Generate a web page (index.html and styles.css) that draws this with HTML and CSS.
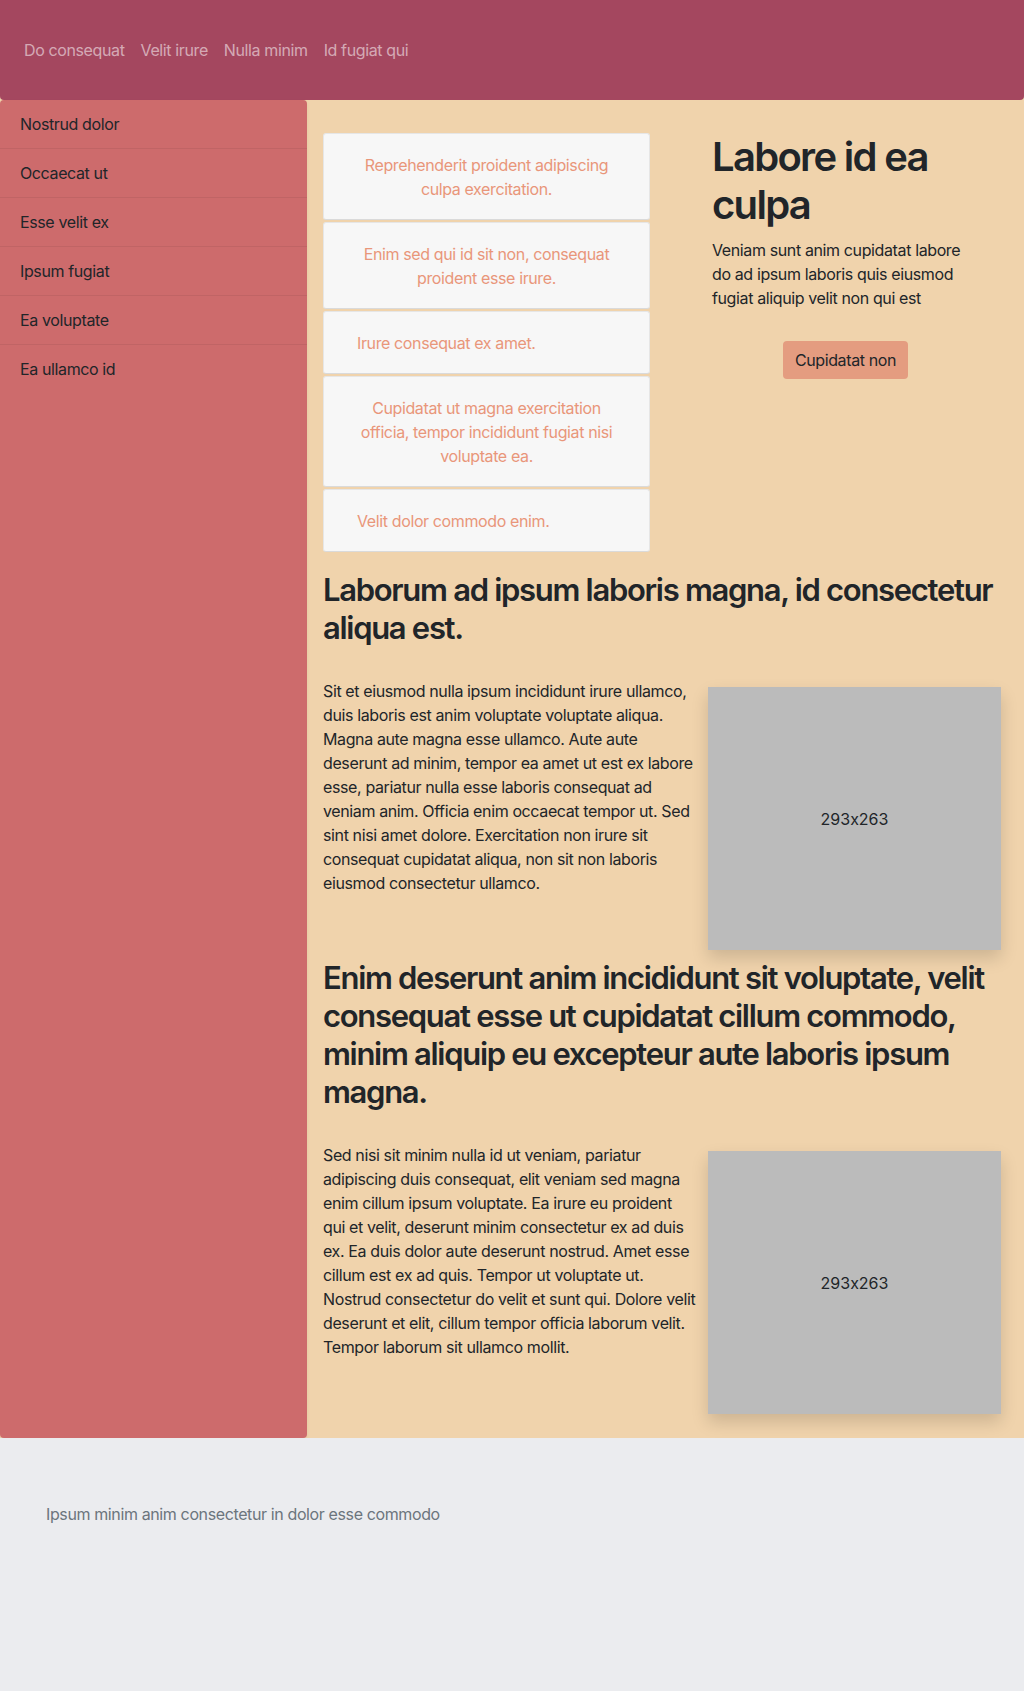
FILE: index.html
```html
<!DOCTYPE html>
<html lang="en">
<head>
<meta charset="utf-8">
<title>Page</title>
<link rel="stylesheet" href="styles.css">
</head>
<body>
<header class="topbar">
  <nav class="topnav">
    <a href="#">Do consequat</a>
    <a href="#">Velit irure</a>
    <a href="#">Nulla minim</a>
    <a href="#">Id fugiat qui</a>
  </nav>
</header>
<div class="layout">
  <aside class="sidebar">
    <a href="#" class="side-item">Nostrud dolor</a>
    <a href="#" class="side-item">Occaecat ut</a>
    <a href="#" class="side-item">Esse velit ex</a>
    <a href="#" class="side-item">Ipsum fugiat</a>
    <a href="#" class="side-item">Ea voluptate</a>
    <a href="#" class="side-item">Ea ullamco id</a>
  </aside>
  <main class="main">
    <div class="top-row">
      <ul class="cards">
        <li class="card center">Reprehenderit proident adipiscing culpa exercitation.</li>
        <li class="card center">Enim sed qui id sit non, consequat proident esse irure.</li>
        <li class="card">Irure consequat ex amet.</li>
        <li class="card center">Cupidatat ut magna exercitation officia, tempor incididunt fugiat nisi voluptate ea.</li>
        <li class="card">Velit dolor commodo enim.</li>
      </ul>
      <section class="hero">
        <h1 class="hero-title">Labore id ea culpa</h1>
        <p class="hero-text">Veniam sunt anim cupidatat labore do ad ipsum laboris quis eiusmod fugiat aliquip velit non qui est</p>
        <div class="hero-action"><a href="#" class="btn">Cupidatat non</a></div>
      </section>
    </div>
    <section class="article">
      <h2 class="article-title">Laborum ad ipsum laboris magna, id consectetur aliqua est.</h2>
      <div class="article-row">
        <p class="article-text">Sit et eiusmod nulla ipsum incididunt irure ullamco, duis laboris est anim voluptate voluptate aliqua. Magna aute magna esse ullamco. Aute aute deserunt ad minim, tempor ea amet ut est ex labore esse, pariatur nulla esse laboris consequat ad veniam anim. Officia enim occaecat tempor ut. Sed sint nisi amet dolore. Exercitation non irure sit consequat cupidatat aliqua, non sit non laboris eiusmod consectetur ullamco.</p>
        <div class="placeholder">293x263</div>
      </div>
    </section>
    <section class="article">
      <h2 class="article-title">Enim deserunt anim incididunt sit voluptate, velit consequat esse ut cupidatat cillum commodo, minim aliquip eu excepteur aute laboris ipsum magna.</h2>
      <div class="article-row">
        <p class="article-text">Sed nisi sit minim nulla id ut veniam, pariatur adipiscing duis consequat, elit veniam sed magna enim cillum ipsum voluptate. Ea irure eu proident qui et velit, deserunt minim consectetur ex ad duis ex. Ea duis dolor aute deserunt nostrud. Amet esse cillum est ex ad quis. Tempor ut voluptate ut. Nostrud consectetur do velit et sunt qui. Dolore velit deserunt et elit, cillum tempor officia laborum velit. Tempor laborum sit ullamco mollit.</p>
        <div class="placeholder">293x263</div>
      </div>
    </section>
  </main>
</div>
<footer class="footer">
  <p class="footer-text">Ipsum minim anim consectetur in dolor esse commodo</p>
</footer>
</body>
</html>
```
FILE: styles.css
```css
* { box-sizing: border-box; }
html, body { margin: 0; padding: 0; }
body {
  font-family: Inter, "Noto Sans", "Liberation Sans", sans-serif;
  font-size: 16px;
  line-height: 24px;
  letter-spacing: -0.38px;
  font-feature-settings: "calt" 0;
  color: #212529;
  background: #f0d3ac;
  min-height: 100vh;
  display: flex;
  flex-direction: column;
}
a { text-decoration: none; color: inherit; }

.topbar {
  height: 100px;
  flex: none;
  background: #a4475f;
  border-radius: 0 0 4px 4px;
  display: flex;
  align-items: center;
  padding: 0 16px;
}
.topnav { display: flex; }
.topnav a {
  color: rgba(255, 255, 255, 0.55);
  padding: 8px 8px;
}

.layout { display: flex; flex: none; }
.sidebar {
  width: 307px;
  flex: none;
  background: #cd6b6c;
  border-radius: 4px;
  box-shadow: 0 2px 4px rgba(0, 0, 0, 0.06);
  display: flex;
  flex-direction: column;
}
.side-item {
  padding: 12px 20px;
  border-bottom: 1px solid rgba(0, 0, 0, 0.06);
  color: #212529;
}
.side-item:last-child { border-bottom: none; }

.main {
  flex: 1;
  padding: 33px 16px 16px 16px;
}
.top-row { display: flex; }
.cards {
  list-style: none;
  margin: 0;
  padding: 0;
  width: 327px;
  flex: none;
  display: flex;
  flex-direction: column;
  gap: 2px;
}
.card {
  background: #f7f7f7;
  border: 1px solid #e6e6e6;
  border-bottom-color: #dadada;
  border-radius: 3px;
  padding: 19px 33px 18px;
  color: #e9967a;
}
.card.center { text-align: center; }

.hero {
  flex: 1;
  padding: 0 29px 0 62px;
}
.hero-title {
  margin: 0 0 9px;
  font-size: 40px;
  line-height: 48px;
  font-weight: 600;
  letter-spacing: -1.7px;
}
.hero-text { margin: 0; }
.hero-action {
  display: flex;
  justify-content: center;
  margin-top: 31px;
}
.btn {
  display: inline-block;
  background: #e49c80;
  border-radius: 4px;
  padding: 7px 12px;
  color: #212529;
}

.article { margin-top: 19px; }
.article + .article { margin-top: 1px; }
.article-title {
  margin: 0 0 32px;
  font-size: 31px;
  line-height: 38px;
  font-weight: 600;
  letter-spacing: -1.3px;
}
.article-row {
  display: flex;
  gap: 12px;
  align-items: flex-start;
}
.article-text { margin: 0; flex: 1; }
.placeholder {
  flex: none;
  width: 293px;
  height: 263px;
  margin: 8px 7px 8px 0;
  background: #bbbbbb;
  display: flex;
  align-items: center;
  justify-content: center;
  letter-spacing: 0;
  box-shadow: 0 8px 16px rgba(0, 0, 0, 0.15);
}

.footer {
  flex: 1;
  background: #ebecef;
  padding: 64px 46px 0;
}
.footer-text { margin: 0; color: #6c757d; }
```
